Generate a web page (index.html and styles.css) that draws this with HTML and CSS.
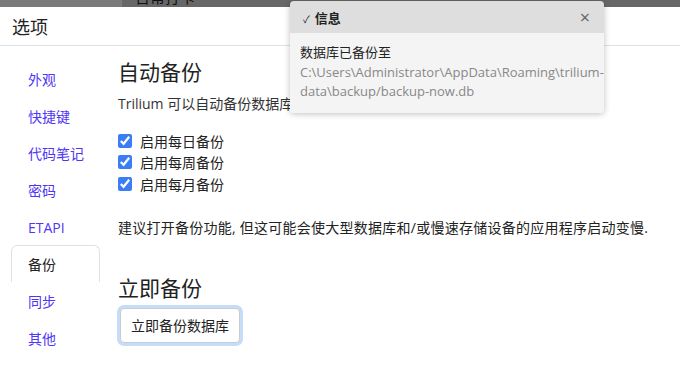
FILE: index.html
```html
<!DOCTYPE html>
<html>
  <head>
  <title>选项</title>
  <link rel="stylesheet" href="styles.css">
  </head>
	<body>
	<div class="backdrop-top">
    <div class="seg-left"></div>
    <div class="seg-right"><span>日常打卡</span></div>
  </div>
  <div class="modal">
    <div class="modal-header">选项</div>
    <div class="modal-body">
      <div class="nav">
        <div class="nav-item">外观</div>
        <div class="nav-item">快捷键</div>
        <div class="nav-item">代码笔记</div>
        <div class="nav-item">密码</div>
        <div class="nav-item">ETAPI</div>
        <div class="nav-item active">备份</div>
        <div class="nav-item">同步</div>
        <div class="nav-item">其他</div>
      </div>
      <div class="content">
        <h4>自动备份</h4>
        <p class="desc">Trilium 可以自动备份数据库:</p>
        <div class="checks">
          <label class="check"><input type="checkbox" checked> 启用每日备份</label>
          <label class="check"><input type="checkbox" checked> 启用每周备份</label>
          <label class="check"><input type="checkbox" checked> 启用每月备份</label>
        </div>
        <p class="note">建议打开备份功能, 但这可能会使大型数据库和/或慢速存储设备的应用程序启动变慢.</p>
        <h4 class="second">立即备份</h4>
        <button class="backup-btn">立即备份数据库</button>
      </div>
    </div>
  </div>

  <div class="toast">
    <div class="toast-header">
      <span class="toast-title"><span class="tick">✓</span>信息</span>
      <span class="toast-close">×</span>
    </div>
    <div class="toast-body">
      数据库已备份至<br>
      <span class="path">C:\Users\Administrator\AppData\Roaming\trilium-<br>data\backup/backup-now.db</span>
    </div>
  </div>
</body>
</html>
```

FILE: styles.css
```css
    body {
      margin: 0;
      padding: 0;
      background: #fff;
      font-family: "Open Sans", "Noto Sans CJK SC", sans-serif;
      color: #222;
      font-size: 14px;
    }

    .backdrop-top {
      display: flex;
      height: 7px;
      overflow: hidden;
    }
    .seg-left {
      width: 122px;
      background: #7a7a7a;
    }
    .seg-right {
      flex: 1;
      background: #676767;
      padding-left: 13px;
    }
    .seg-right span {
      display: block;
      font-size: 15px;
      line-height: 15px;
      margin-top: -10px;
      color: #111;
    }

    .modal-header {
      height: 38px;
      padding: 0 12px;
      display: flex;
      align-items: center;
      font-size: 18px;
      border-bottom: 1px solid #dee2e6;
      color: #222;
    }

    .modal-body {
      display: flex;
    }

    .nav {
      width: 89px;
      margin-left: 11px;
      padding-top: 14px;
    }
    .nav-item {
      height: 37px;
      line-height: 37px;
      padding-left: 16px;
      color: #5036f4;
      border: 1px solid transparent;
      border-bottom: none;
      box-sizing: border-box;
    }
    .nav-item.active {
      color: #222;
      border-color: #dee2e6;
      border-radius: 6px 6px 0 0;
    }

    .content {
      margin-left: 18px;
      padding-top: 14px;
    }
    h4 {
      margin: 0;
      font-size: 21px;
      line-height: 25px;
      font-weight: normal;
      color: #222;
    }
    h4.second {
      margin-top: 38px;
    }
    .desc {
      margin: 8px 0 0;
      line-height: 21px;
      color: #333;
    }
    .checks {
      margin-top: 16px;
    }
    .check {
      display: flex;
      align-items: center;
      gap: 8px;
      height: 21.5px;
      font-size: 14px;
    }
    .check input {
      width: 14px;
      height: 14px;
      margin: 0;
      accent-color: #3b7df5;
    }
    .note {
      margin: 22px 0 0;
      line-height: 21px;
      letter-spacing: 0.25px;
    }

    .backup-btn {
      margin: 7px 0 0 2px;
      height: 35px;
      padding: 0 10px;
      font-family: inherit;
      font-size: 14px;
      color: #222;
      background: #fff;
      border: 1px solid #ccc;
      border-radius: 4px;
      box-shadow: 0 0 0 3px #c6dcfb;
    }

    .toast {
      position: absolute;
      left: 290px;
      top: 1px;
      width: 314px;
      border-radius: 4px;
      overflow: hidden;
      box-shadow: 0 1px 6px rgba(0, 0, 0, 0.25);
      font-size: 13px;
    }
    .toast-header {
      height: 32px;
      background: #dedede;
      display: flex;
      align-items: center;
      justify-content: space-between;
      padding: 0 14px 0 13px;
    }
    .toast-title {
      font-weight: bold;
      color: #222;
    }
    .tick {
      font-weight: normal;
      font-size: 10px;
      margin-right: 5px;
    }
    .toast-close {
      font-size: 18px;
      color: #666;
    }
    .toast-body {
      background: #f4f4f4;
      padding: 10px 10px 11px;
      line-height: 19.5px;
      color: #222;
    }
    .path {
      color: #888;
    }
```
